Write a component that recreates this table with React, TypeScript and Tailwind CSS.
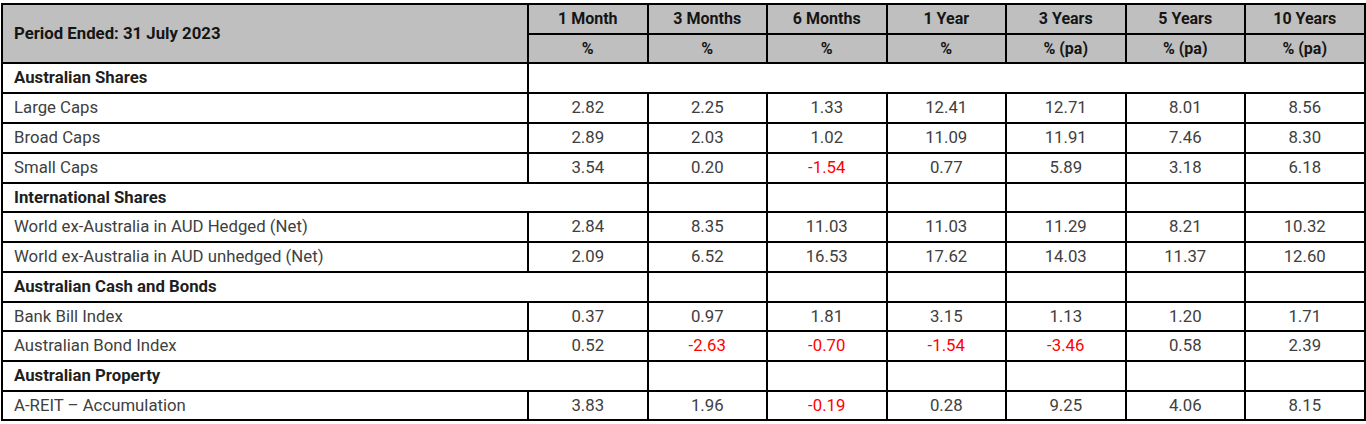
import React from "react";

type Row = {
  label: string;
  values: number[];
};

type Section = {
  title: string;
  // first section keeps the heading in the label column only
  span: "one" | "two";
  rows: Row[];
};

const periods = [
  { name: "1 Month", unit: "%" },
  { name: "3 Months", unit: "%" },
  { name: "6 Months", unit: "%" },
  { name: "1 Year", unit: "%" },
  { name: "3 Years", unit: "% (pa)" },
  { name: "5 Years", unit: "% (pa)" },
  { name: "10 Years", unit: "% (pa)" },
];

const sections: Section[] = [
  {
    title: "Australian Shares",
    span: "one",
    rows: [
      { label: "Large Caps", values: [2.82, 2.25, 1.33, 12.41, 12.71, 8.01, 8.56] },
      { label: "Broad Caps", values: [2.89, 2.03, 1.02, 11.09, 11.91, 7.46, 8.3] },
      { label: "Small Caps", values: [3.54, 0.2, -1.54, 0.77, 5.89, 3.18, 6.18] },
    ],
  },
  {
    title: "International Shares",
    span: "two",
    rows: [
      {
        label: "World ex-Australia in AUD Hedged (Net)",
        values: [2.84, 8.35, 11.03, 11.03, 11.29, 8.21, 10.32],
      },
      {
        label: "World ex-Australia in AUD unhedged (Net)",
        values: [2.09, 6.52, 16.53, 17.62, 14.03, 11.37, 12.6],
      },
    ],
  },
  {
    title: "Australian Cash and Bonds",
    span: "two",
    rows: [
      { label: "Bank Bill Index", values: [0.37, 0.97, 1.81, 3.15, 1.13, 1.2, 1.71] },
      {
        label: "Australian Bond Index",
        values: [0.52, -2.63, -0.7, -1.54, -3.46, 0.58, 2.39],
      },
    ],
  },
  {
    title: "Australian Property",
    span: "two",
    rows: [
      {
        label: "A-REIT \u2013 Accumulation",
        values: [3.83, 1.96, -0.19, 0.28, 9.25, 4.06, 8.15],
      },
    ],
  },
];

const cell = "border-2 border-black";

export default function App() {
  return (
    <div className="bg-white w-[1366px] h-[424px] pt-[3px] pl-[1px] font-['Roboto',sans-serif] text-[16.75px]">
      <table className="table-fixed border-collapse w-[1363px]">
        <colgroup>
          <col className="w-[526px]" />
          {periods.map((p) => (
            <col key={p.name} className="w-[119.5px]" />
          ))}
        </colgroup>
        <thead className="bg-[#bfbfbf] text-[#151515] font-bold">
          <tr className="h-[30px]">
            <th rowSpan={2} className={`${cell} text-left pl-[11px] pt-[1px]`}>
              Period Ended: 31 July 2023
            </th>
            {periods.map((p) => (
              <th key={p.name} className={`${cell} text-center text-[16px]`}>
                {p.name}
              </th>
            ))}
          </tr>
          <tr className="h-[29px]">
            {periods.map((p) => (
              <th key={p.name} className={`${cell} text-center text-[16px]`}>
                {p.unit}
              </th>
            ))}
          </tr>
        </thead>
        <tbody className="text-[#404040]">
          {sections.map((s, si) => (
            <React.Fragment key={s.title}>
              <tr className={si === 1 ? "h-[29px]" : "h-[30px]"}>
                {s.span === "one" ? (
                  <>
                    <td className={`${cell} pl-[11px] font-bold text-[#1f1f1f]`}>
                      {s.title}
                    </td>
                    <td colSpan={7} className={cell}></td>
                  </>
                ) : (
                  <>
                    <td colSpan={2} className={`${cell} pl-[11px] font-bold text-[#1f1f1f]`}>
                      {s.title}
                    </td>
                    {periods.slice(1).map((p) => (
                      <td key={p.name} className={cell}></td>
                    ))}
                  </>
                )}
              </tr>
              {s.rows.map((r, ri) => (
                <tr
                  key={r.label}
                  className={
                    (si === 2 && ri === 0) || si === 3 ? "h-[29px]" : "h-[30px]"
                  }
                >
                  <td className={`${cell} pl-[11px] whitespace-nowrap`}>{r.label}</td>
                  {r.values.map((v, i) => (
                    <td
                      key={i}
                      className={`${cell} text-center ${v < 0 ? "text-[#ff0000]" : ""}`}
                    >
                      {v.toFixed(2)}
                    </td>
                  ))}
                </tr>
              ))}
            </React.Fragment>
          ))}
        </tbody>
      </table>
    </div>
  );
}
